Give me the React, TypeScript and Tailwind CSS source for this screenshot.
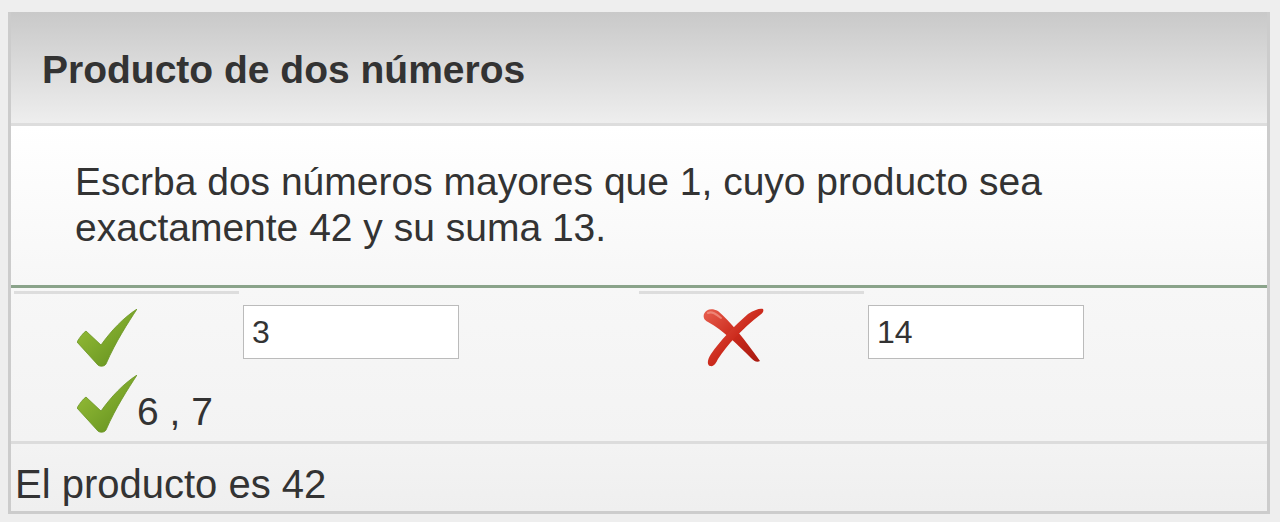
import React from 'react';

function CheckIcon({ className = '' }: { className?: string }) {
    return (
        <svg viewBox="0 0 60 58" className={className}>
            <defs>
                <linearGradient id="chk" x1="0" y1="0" x2="1" y2="1">
                    <stop offset="0" stopColor="#9cc23a" />
                    <stop offset="0.55" stopColor="#7aa52a" />
                    <stop offset="1" stopColor="#5d8a1c" />
                </linearGradient>
            </defs>
            <path
                d="M0 33 C3 28 6 24 9 22 L24 36 C34 22 46 9 60 0 C51 14 39 32 29 55 C27 58 22 58 20 55 Z"
                fill="url(#chk)"
                stroke="#6a9422"
                strokeWidth="0.8"
                strokeLinejoin="round"
            />
        </svg>
    );
}

function CrossIcon({ className = '' }: { className?: string }) {
    return (
        <svg viewBox="0 0 62 60" className={className}>
            <defs>
                <linearGradient id="crs" x1="0" y1="0" x2="1" y2="1">
                    <stop offset="0" stopColor="#e8604f" />
                    <stop offset="0.5" stopColor="#cc2b1d" />
                    <stop offset="1" stopColor="#a81a10" />
                </linearGradient>
            </defs>
            <path
                d="M2 7 C4 2 10 1 16 4 C28 14 44 34 58 54 C55 56 52 54 49 51 C36 38 22 24 6 15 C2 13 1 10 2 7 Z"
                fill="url(#crs)"
            />
            <path
                d="M61 2 C58 1 52 3 46 7 C32 19 18 34 9 47 C5 53 5 58 8 59 C12 60 14 56 16 52 C25 38 40 22 58 8 C61 6 62 4 61 2 Z"
                fill="url(#crs)"
            />
            <path d="M6 6 C10 4 14 7 19 11" stroke="#f39a8c" strokeWidth="2" fill="none" strokeLinecap="round" opacity="0.7" />
        </svg>
    );
}

export default function App() {
    return (
        <div className="min-h-screen bg-[#eeeeee] pt-[12px] pl-[8px] pr-[10px] pb-2 font-['Liberation_Sans',Arial,sans-serif] text-[#333333]">
            <div className="border-[3px] border-t-0 border-[#cccccc]">
                <div className="h-[114px] flex items-center pl-[31px] pt-[5px] bg-gradient-to-b from-[#c9c9c9] to-[#eeeeee] border-b-[3px] border-[#dddddd]">
                    <h2 className="text-[39px] font-bold">Producto de dos números</h2>
                </div>

                <div className="bg-gradient-to-b from-white to-[#f7f7f7] pt-[33px] pb-[34px] pl-[64px] border-b-[3px] border-[#8aa38a]">
                    <p className="max-w-[1100px] text-[39px] leading-[46px]">
                        Escrba dos números mayores que 1, cuyo producto sea exactamente 42 y su suma 13.
                    </p>
                </div>

                <div className="h-[156px] grid grid-cols-2 bg-gradient-to-b from-[#f7f7f7] to-[#f3f3f3] border-b-[3px] border-[#dcdcdc]">
                    <div>
                        <div className="mt-[3px] ml-[3px] w-[225px] h-[3px] bg-[#dddddd]" />
                        <div className="flex items-start mt-[11px]">
                            <div className="w-[232px] pl-[66px] pt-[4px]">
                                <CheckIcon className="w-[60px] h-[58px]" />
                            </div>
                            <input
                                readOnly
                                value="3"
                                className="w-[216px] h-[54px] bg-white border border-[#bbbbbb] pl-[8px] text-[32px] outline-none"
                            />
                        </div>
                        <div className="flex items-start pl-[66px] mt-[8px]">
                            <CheckIcon className="w-[60px] h-[58px]" />
                            <span className="text-[39px] leading-[44px] mt-[15px]">6 , 7</span>
                        </div>
                    </div>
                    <div>
                        <div className="mt-[3px] w-[225px] h-[3px] bg-[#dddddd]" />
                        <div className="flex items-start mt-[11px]">
                            <div className="w-[229px] pl-[63px] pt-[2px]">
                                <CrossIcon className="w-[62px] h-[60px]" />
                            </div>
                            <input
                                readOnly
                                value="14"
                                className="w-[216px] h-[54px] bg-white border border-[#bbbbbb] pl-[8px] text-[32px] outline-none"
                            />
                        </div>
                    </div>
                </div>

                <div className="h-[67px] pl-[4px] pt-[17px] bg-gradient-to-b from-[#f3f3f3] to-[#efefef]">
                    <p className="text-[40px] leading-[46px]">El producto es 42</p>
                </div>
            </div>
        </div>
    );
}
